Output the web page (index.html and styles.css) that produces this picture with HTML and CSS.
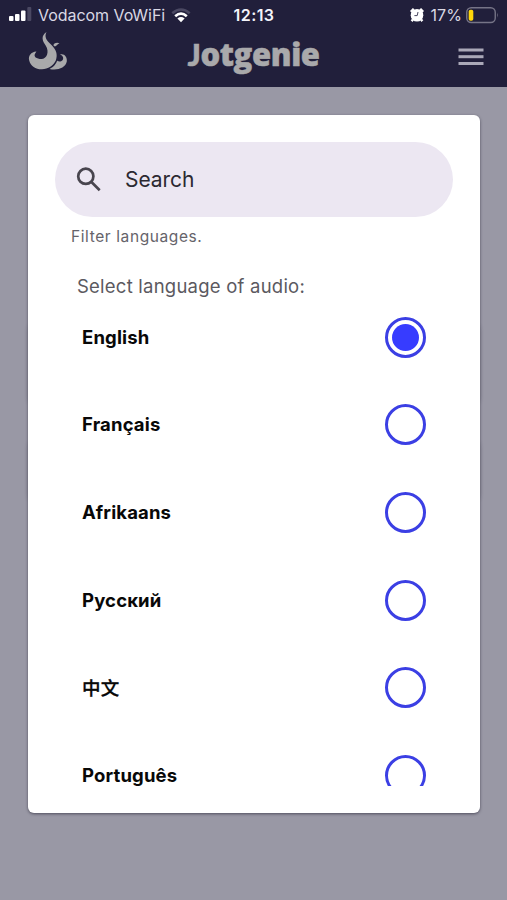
FILE: index.html
```html
<!DOCTYPE html>
<html lang="en">
<head>
<meta charset="utf-8">
<title>Jotgenie</title>
<link rel="stylesheet" href="styles.css">
</head>
<body>
<header class="header">
  <div class="status">
    <div class="carrier">
      <svg class="signal" width="23" height="15" viewBox="0 0 23 15"><g fill="#fff"><rect x="0" y="9" width="4.5" height="5" rx="1"/><rect x="6" y="7" width="4.5" height="7" rx="1"/><rect x="12" y="3.500" width="4.500" height="10.500" rx="1"/></g><rect x="18.300" y="0" width="4" height="14" rx="1" fill="#4a4862"/></svg>
      <span class="carrier-name">Vodacom VoWiFi</span>
      <svg class="wifi" width="20" height="15" viewBox="0 0 20 15" fill="none"><path d="M1.300 5.300Q10-2.400 18.700 5.300" stroke="#4a4862" stroke-width="2.500"/><path d="M4.200 8.200Q10 3.200 15.800 8.200" stroke="#fff" stroke-width="2.700"/><path d="M6.400 10.500Q10 7.600 13.600 10.500L10 14.300Z" fill="#fff"/></svg>
    </div>
    <time class="clock">12:13</time>
    <div class="power">
      <svg width="14" height="14" viewBox="0 0 14 14"><path d="M.8 3.800L3.800 .8M10.200 .8L13.200 3.800M3 11.500L1.600 13.100M11 11.500l1.400 1.600" stroke="#fff" stroke-width="2.400"/><circle cx="7" cy="7.200" r="6.300" fill="#fff"/><path d="M8 4L7.200 7.600H4.400" stroke="#49475f" stroke-width="1" fill="none"/></svg>
      <span class="percent">17%</span>
      <svg class="battery" width="33" height="17" viewBox="0 0 33 17"><rect x=".75" y=".75" width="28.500" height="14.800" rx="4.500" fill="none" stroke="#767487" stroke-width="1.400"/><rect x="2.700" y="2.700" width="4.600" height="11" rx="1.800" fill="#ffd60a"/><path d="M31 5.500q1.600 2.600 0 5.200z" fill="#767487"/></svg>
    </div>
  </div>
  <div class="appbar">
    <svg class="logo" width="40" height="40" viewBox="0 0 40 40" fill="#a9a9ab"><path d="M18.500 0C12.500 4 14.500 9 17.500 13.200C22 20 18.500 27 13.500 27C8.500 27 5 24.500 7.300 21.200L8.400 19.600C3 20 0 24 1.200 28.500C2.600 34.500 8 37.500 14 37.300C20 37.200 25.500 33.500 27.800 28.500C30 22 28 17.500 23.500 13C18.500 8.500 16 5 18.500 0Z"/><path d="M25.300 13.200C26.500 11 29 10.200 31.500 11.400C29.500 11.600 28.500 14 26.800 14.600Z"/><path d="M32 22.600C36 21 39.500 25 38.800 29.500C37.500 36 29 38.800 21.500 36.900C26 35 28 32 29.200 28.600C30 29.800 33 30 34.500 28.300C36 26.500 35 23.600 32 22.600Z"/></svg>
    <h1 class="brand"><span class="brand-cap">J</span>otgenie</h1>
    <svg class="menu" width="26" height="18" viewBox="0 0 26 18" fill="#aaa8b8"><rect x=".5" y=".5" width="25" height="3"/><rect x=".5" y="7.200" width="25" height="3"/><rect x=".5" y="14" width="25" height="3"/></svg>
  </div>
</header>
<main class="backdrop">
  <section class="dialog">
    <div class="search">
      <svg width="26" height="26" viewBox="0 0 26 26" fill="none" stroke="#48454e" stroke-width="2.700"><circle cx="9.800" cy="9.300" r="7.600"/><path d="M15.200 14.700l8.500 8.500"/></svg>
      <span class="search-label">Search</span>
    </div>
    <p class="hint">Filter languages.</p>
    <div class="list">
      <p class="prompt">Select language of audio:</p>
      <label class="row"><span>English</span><i class="radio checked"></i></label>
      <label class="row"><span>Français</span><i class="radio"></i></label>
      <label class="row"><span>Afrikaans</span><i class="radio"></i></label>
      <label class="row"><span>Русский</span><i class="radio"></i></label>
      <label class="row"><span class="cjk" lang="zh">中文</span><i class="radio"></i></label>
      <label class="row"><span>Português</span><i class="radio"></i></label>
    </div>
  </section>
</main>
</body>
</html>
```
FILE: styles.css
```css
* { box-sizing: border-box; }
body {
  margin: 0;
  height: 900px;
  overflow: hidden;
  display: flex;
  flex-direction: column;
  font-family: Inter, "Noto Sans CJK SC", sans-serif;
}
svg { display: block; flex: none; }
.header { height: 87px; background: #211f3b; flex: none; }
.status {
  height: 30px;
  padding: 0 8px 0 9px;
  display: grid;
  grid-template-columns: 1fr auto 1fr;
  align-items: center;
  color: #d9d8e4;
  font-size: 16px;
  line-height: 30px;
}
.carrier, .power { display: flex; align-items: center; }
.signal { margin: -1px 6px 0 0; }
.wifi { margin-left: 6px; }
.carrier-name { letter-spacing: -.05px; white-space: nowrap; }
.clock { color: #f4f4fa; font-weight: 600; letter-spacing: .4px; }
.power { justify-content: flex-end; }
.percent { margin: 0 4px 0 6px; letter-spacing: .1px; }
.appbar {
  height: 57px;
  padding: 0 23px 0 28px;
  display: grid;
  grid-template-columns: 1fr auto 1fr;
}
.logo { margin-top: 2px; }
.brand {
  margin: 0 5px 0 0;
  font: 800 31px/48px "Open Sans", sans-serif;
  letter-spacing: -.4px;
  color: #a9a9ab;
  -webkit-text-stroke: .5px #a9a9ab;
}
.brand-cap { font-family: Lato, sans-serif; font-weight: 900; }
.menu { margin-top: 18px; justify-self: end; }
.backdrop {
  flex: 1;
  padding: 28px 27px 0 28px;
  background: #9998a5;
  position: relative;
  z-index: 0;
}
.dialog {
  height: 698px;
  padding: 27px 27px 0;
  background: #fff;
  border-radius: 6px;
  box-shadow: 0 1px 3px rgba(40, 38, 55, .65);
}
/* Edges of the page cards dimmed behind the dialog */
.backdrop::before,
.backdrop::after {
  content: "";
  position: absolute;
  z-index: -1;
  left: 28px;
  right: 27px;
  border-radius: 6px;
  box-shadow: 0 1px 4px rgba(50, 48, 65, .22);
}
.backdrop::before { top: 236px; height: 80px; }
.backdrop::after { top: 353px; height: 60px; }
.search {
  height: 75px;
  padding-left: 21px;
  border-radius: 38px;
  background: #ece7f2;
  display: flex;
  align-items: center;
  gap: 23px;
  color: #2b2931;
}
.search-label { font-size: 21px; letter-spacing: -.05px; }
.hint {
  margin: 10px 0 0 16px;
  color: #65636a;
  font-size: 15.5px;
  line-height: 20px;
  letter-spacing: .6px;
}
.list { height: 524px; margin-top: 15px; overflow: hidden; }
.prompt {
  margin: 0 0 0 22px;
  height: 31px;
  line-height: 48px;
  font-size: 18.5px;
  letter-spacing: .23px;
  color: #5b595f;
}
.row {
  height: 87.6px;
  padding: 0 27px;
  display: flex;
  align-items: center;
  justify-content: space-between;
  color: #080808;
  font-size: 18.5px;
  font-weight: 700;
  letter-spacing: .15px;
}
.cjk { font-weight: 500; -webkit-text-stroke: .3px #080808; }
.radio {
  width: 41px;
  height: 41px;
  margin-top: 1px;
  padding: 4px;
  border: 3px solid #3b3fe4;
  border-radius: 50%;
}
.checked::before {
  content: "";
  display: block;
  width: 27px;
  height: 27px;
  border-radius: 50%;
  background: #373cff;
}
```
